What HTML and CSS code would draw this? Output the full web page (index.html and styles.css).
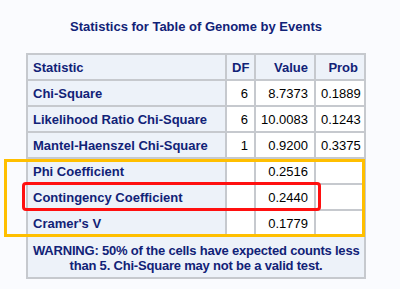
FILE: index.html
```html
<!DOCTYPE html>
<html>
<head>
<meta charset="utf-8">
<title>Statistics for Table of Genome by Events</title>
<link rel="stylesheet" href="styles.css">
</head>

<body>

<div id="container">
    <div class="caption">Statistics for Table of Genome by Events</div>
    <table class="stats">
        <tr>
            <th class="c_stat left">Statistic</th>
            <th class="c_df">DF</th>
            <th class="c_value">Value</th>
            <th class="c_prob">Prob</th>
        </tr>
        <tr>
            <th class="left">Chi-Square</th>
            <td>6</td>
            <td>8.7373</td>
            <td>0.1889</td>
        </tr>
        <tr>
            <th class="left">Likelihood Ratio Chi-Square</th>
            <td>6</td>
            <td>10.0083</td>
            <td>0.1243</td>
        </tr>
        <tr>
            <th class="left">Mantel-Haenszel Chi-Square</th>
            <td>1</td>
            <td>0.9200</td>
            <td>0.3375</td>
        </tr>
        <tr>
            <th class="left">Phi Coefficient</th>
            <td></td>
            <td>0.2516</td>
            <td></td>
        </tr>
        <tr>
            <th class="left">Contingency Coefficient</th>
            <td></td>
            <td>0.2440</td>
            <td></td>
        </tr>
        <tr>
            <th class="left">Cramer's V</th>
            <td></td>
            <td>0.1779</td>
            <td></td>
        </tr>
        <tr>
            <th class="note" colspan="4">WARNING: 50% of the cells have expected counts less<br>than 5. Chi-Square may not be a valid test.</th>
        </tr>
    </table>
    <div class="mark mark_orange"></div>
    <div class="mark mark_red"></div>
</div>

</body>
</html>
```

FILE: styles.css
```css
body {
    margin: 0;
    padding: 0;
    background: #fafbfe;
    font: bold 13px/15px "Liberation Sans", Arial, sans-serif;
    color: #112277;
}
#container {
    position: relative;
    width: 400px;
    height: 289px;
}
.caption {
    width: 340px;
    margin: 0 0 0 26px;
    padding: 19px 0 0 0;
    height: 53px;
    box-sizing: border-box;
    text-align: center;
    line-height: 16px;
}
.stats {
    margin: 0 0 0 26px;
    width: 340px;
    table-layout: fixed;
    border-collapse: separate;
    border-spacing: 0;
    border-top: 2px solid #c6c9ce;
    border-left: 2px solid #c6c9ce;
}
.stats th,
.stats td {
    box-sizing: border-box;
    height: 26px;
    padding: 1px 6px 0 5px;
    border-right: 2px solid #c6c9ce;
    border-bottom: 2px solid #c6c9ce;
    text-align: right;
    vertical-align: middle;
    white-space: nowrap;
}
.stats th {
    background: #edf2f9;
    font-weight: bold;
    color: #112277;
}
.stats td {
    background: #fff;
    font-weight: normal;
    color: #000;
}
.stats th.left {
    text-align: left;
}
.c_stat {
    width: 199px;
}
.c_df {
    width: 29px;
}
.c_value {
    width: 60px;
}
.c_prob {
    width: 50px;
}
.stats th.note {
    height: 42px;
    padding: 2px 5px 0 5px;
    text-align: center;
    letter-spacing: -0.2px;
}
.mark {
    position: absolute;
    box-sizing: border-box;
}
.mark_orange {
    left: 4px;
    top: 159px;
    width: 361px;
    height: 78px;
    border: 3px solid #ffbf00;
}
.mark_red {
    left: 22px;
    top: 182px;
    width: 299px;
    height: 29px;
    border: 3px solid #ff1010;
    border-radius: 4px;
}
```
